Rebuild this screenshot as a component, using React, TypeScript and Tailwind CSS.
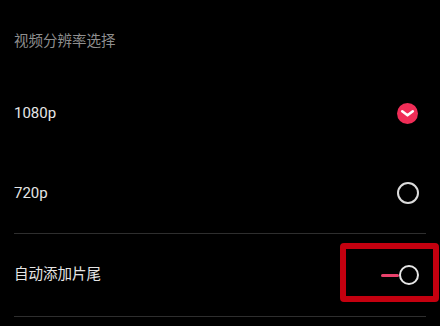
const Check = () => (
  <svg width="21" height="21" viewBox="0 0 21 21">
    <circle cx="10.5" cy="10.5" r="10.5" fill="#f02d57" />
    <path d="M5.2 8.3 L10.5 12.3 L15.8 8.3" fill="none" stroke="#fff" strokeWidth="2.6" strokeLinecap="round" strokeLinejoin="round" />
  </svg>
);

const Empty = () => (
  <div className="h-[22px] w-[22px] rounded-full border-2 border-[#dcdcdc]" />
);

export default function App() {
  const font = { fontFamily: 'Roboto, "Noto Sans CJK SC", sans-serif' };
  return (
    <div className="relative h-[326px] w-[440px] overflow-hidden bg-black" style={font}>
      <div className="h-[73px] pl-[14px] pt-[33px] text-[14.5px] leading-[18px] text-[#8f8f8f]">
        视频分辨率选择
      </div>

      <div className="flex h-[80px] items-center justify-between pl-[14px] pr-[22px]">
        <span className="text-[15px] text-[#e6e6e6]">1080p</span>
        <Check />
      </div>

      <div className="flex h-[80px] items-center justify-between pl-[14px] pr-[21px]">
        <span className="text-[15px] text-[#e6e6e6]">720p</span>
        <Empty />
      </div>

      <div className="mx-[14px] h-px bg-[#2e2e2e]" />

      <div className="flex h-[82px] items-center justify-between pl-[14px] pr-[21px]">
        <span className="text-[14.5px] text-[#e6e6e6]">自动添加片尾</span>
        <div className="flex items-center">
          <div className="h-[3px] w-[18px] rounded-full bg-[#e8416b]" />
          <div className="h-[20px] w-[20px] rounded-full border-2 border-[#e6e6e6]" />
        </div>
      </div>

      <div className="mx-[14px] h-px bg-[#2e2e2e]" />

      <div className="absolute left-[340px] top-[243px] h-[59px] w-[99px] rounded-[4px] border-[6px] border-[#c4000f]" />
    </div>
  );
}
